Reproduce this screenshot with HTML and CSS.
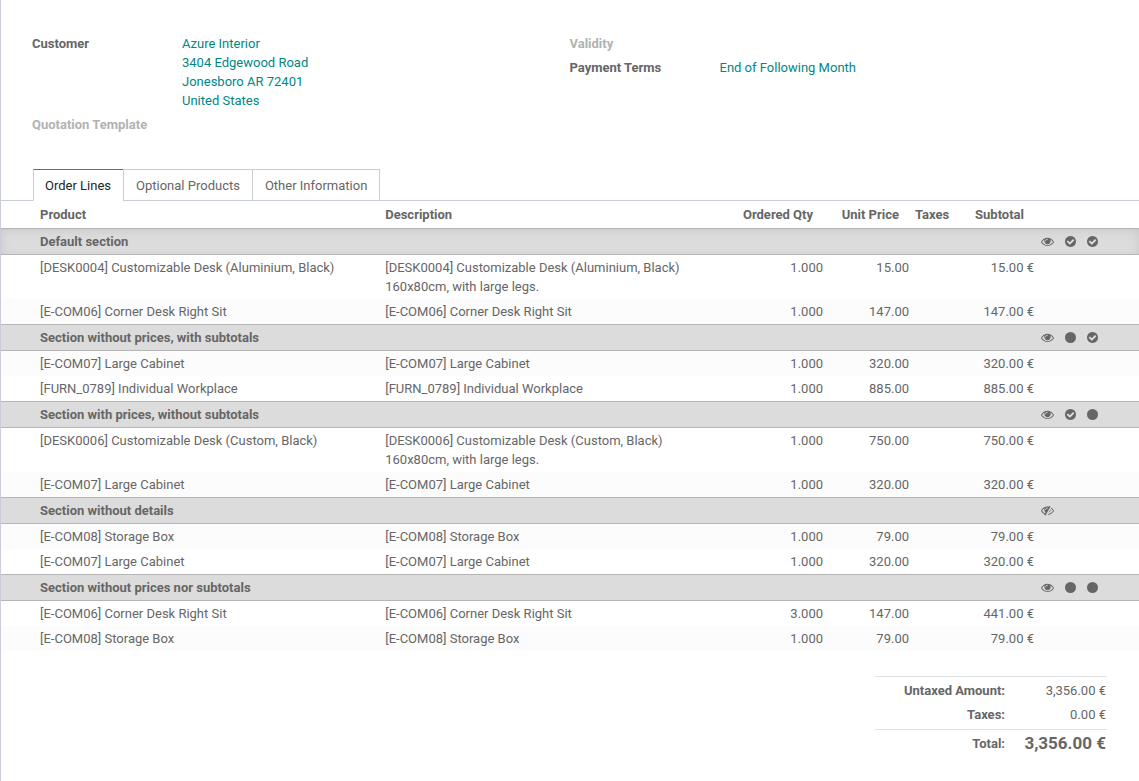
FILE: index.html
```html
<!DOCTYPE html>
<html lang="en">
<head>
<meta charset="utf-8">
<meta name="viewport" content="width=device-width, initial-scale=1">
<title>Quotation</title>
<link rel="stylesheet" href="styles.css">
</head>
<body>
<svg class="sprite" aria-hidden="true">
  <symbol id="eye" viewBox="0 0 1792 1536"><path d="M1664 832q-152-236-381-353 61 104 61 225 0 185-131.500 316.500t-316.500 131.500-316.500-131.500-131.500-316.500q0-121 61-225-229 117-381 353 133 205 333.500 326.500t434.500 121.500 434.500-121.500 333.500-326.500zm-720-384q0-20-14-34t-34-14q-125 0-214.500 89.500t-89.500 214.500q0 20 14 34t34 14 34-14 14-34q0-86 61-147t147-61q20 0 34-14t14-34zm848 384q0 34-20 69-140 230-376.500 368.500t-499.500 138.500-499.500-139-376.500-368q-20-35-20-69t20-69q140-229 376.500-368t499.500-139 499.500 139 376.500 368q20 35 20 69z"/></symbol>
  <symbol id="eye-off" viewBox="0 0 1792 1536"><path d="M555 1073l78-141q-87-63-136-159t-49-203q0-121 61-225-229 117-381 353 167 258 427 375zm389-759q0-20-14-34t-34-14q-125 0-214.500 89.500t-89.500 214.500q0 20 14 34t34 14 34-14 14-34q0-86 61-147t147-61q20 0 34-14t14-34zm363-191q0 7-1 9-106 189-316 567t-315 566l-49 89q-10 16-28 16-12 0-134-70-16-10-16-28 0-12 44-87-143-65-263.500-173t-208.500-245q-20-31-20-69t20-69q153-235 380-371t496-136q89 0 180 17l54-97q10-16 28-16 5 0 18 6t31 15.500 33 18.500 31.500 18.500 19.500 11.500q16 10 16 27zm37 447q0 139-79 253.500t-209 164.500l280-502q8 45 8 84zm448 128q0 35-20 69-39 64-109 145-150 172-347.500 267t-419.500 95l74-132q212-18 392.500-137t301.500-307q-115-179-282-294l63-112q95 64 182.500 153t144.500 184q20 34 20 69z" transform="translate(0 100)"/></symbol>
  <symbol id="check" viewBox="0 0 1536 1536"><path d="M1284 606q0-28-18-46l-91-90q-19-19-45-19t-45 19l-408 407-226-226q-19-19-45-19t-45 19l-91 90q-18 18-18 46 0 27 18 45l362 362q19 19 45 19 27 0 46-19l543-543q18-18 18-45zm252 162q0 209-103 385.500t-279.500 279.500-385.500 103-385.500-103-279.500-279.500-103-385.500 103-385.500 279.500-279.500 385.500-103 385.500 103 279.500 279.500 103 385.500z"/></symbol>
  <symbol id="dot" viewBox="0 0 1536 1536"><circle cx="768" cy="768" r="768"/></symbol>
</svg>
<main class="sheet">
  <div class="groups">
    <dl class="group">
      <div class="field"><dt>Customer</dt><dd><a href="#customer">Azure Interior<br>3404 Edgewood Road<br>Jonesboro AR 72401<br>United States</a></dd></div>
      <div class="field empty"><dt>Quotation Template</dt><dd></dd></div>
    </dl>
    <dl class="group">
      <div class="field empty"><dt>Validity</dt><dd></dd></div>
      <div class="field"><dt>Payment Terms</dt><dd><a href="#terms">End of Following Month</a></dd></div>
    </dl>
  </div>

  <div class="tabs" role="tablist">
    <button class="tab active" role="tab" aria-selected="true">Order Lines</button>
    <button class="tab" role="tab" aria-selected="false">Optional Products</button>
    <button class="tab" role="tab" aria-selected="false">Other Information</button>
  </div>

  <table class="lines">
    <colgroup><col class="c-product"><col><col class="c-qty"><col class="c-price"><col class="c-taxes"><col class="c-subtotal"><col class="c-eye"><col class="c-check"><col class="c-last"></colgroup>
    <thead>
      <tr><th>Product</th><th>Description</th><th class="num">Ordered Qty</th><th class="num">Unit Price</th><th>Taxes</th><th class="num">Subtotal</th><th></th><th></th><th></th></tr>
    </thead>
    <tbody>
      <tr class="section first"><th colspan="6">Default section</th><td><button class="icon" aria-label="Hide details"><svg class="wide"><use href="#eye"/></svg></button></td><td><button class="icon" aria-label="Hide prices"><svg><use href="#check"/></svg></button></td><td><button class="icon" aria-label="Hide subtotal"><svg><use href="#check"/></svg></button></td></tr>
      <tr><td>[DESK0004] Customizable Desk (Aluminium, Black)</td><td>[DESK0004] Customizable Desk (Aluminium, Black)<br>160x80cm, with large legs.</td><td class="num">1.000</td><td class="num">15.00</td><td></td><td class="num">15.00 €</td><td></td><td></td><td></td></tr>
      <tr><td>[E-COM06] Corner Desk Right Sit</td><td>[E-COM06] Corner Desk Right Sit</td><td class="num">1.000</td><td class="num">147.00</td><td></td><td class="num">147.00 €</td><td></td><td></td><td></td></tr>
      <tr class="section"><th colspan="6">Section without prices, with subtotals</th><td><button class="icon" aria-label="Hide details"><svg class="wide"><use href="#eye"/></svg></button></td><td><button class="icon" aria-label="Show prices"><svg><use href="#dot"/></svg></button></td><td><button class="icon" aria-label="Hide subtotal"><svg><use href="#check"/></svg></button></td></tr>
      <tr><td>[E-COM07] Large Cabinet</td><td>[E-COM07] Large Cabinet</td><td class="num">1.000</td><td class="num">320.00</td><td></td><td class="num">320.00 €</td><td></td><td></td><td></td></tr>
      <tr><td>[FURN_0789] Individual Workplace</td><td>[FURN_0789] Individual Workplace</td><td class="num">1.000</td><td class="num">885.00</td><td></td><td class="num">885.00 €</td><td></td><td></td><td></td></tr>
      <tr class="section"><th colspan="6">Section with prices, without subtotals</th><td><button class="icon" aria-label="Hide details"><svg class="wide"><use href="#eye"/></svg></button></td><td><button class="icon" aria-label="Hide prices"><svg><use href="#check"/></svg></button></td><td><button class="icon" aria-label="Show subtotal"><svg><use href="#dot"/></svg></button></td></tr>
      <tr><td>[DESK0006] Customizable Desk (Custom, Black)</td><td>[DESK0006] Customizable Desk (Custom, Black)<br>160x80cm, with large legs.</td><td class="num">1.000</td><td class="num">750.00</td><td></td><td class="num">750.00 €</td><td></td><td></td><td></td></tr>
      <tr><td>[E-COM07] Large Cabinet</td><td>[E-COM07] Large Cabinet</td><td class="num">1.000</td><td class="num">320.00</td><td></td><td class="num">320.00 €</td><td></td><td></td><td></td></tr>
      <tr class="section"><th colspan="6">Section without details</th><td><button class="icon" aria-label="Show details"><svg class="wide"><use href="#eye-off"/></svg></button></td><td></td><td></td></tr>
      <tr><td>[E-COM08] Storage Box</td><td>[E-COM08] Storage Box</td><td class="num">1.000</td><td class="num">79.00</td><td></td><td class="num">79.00 €</td><td></td><td></td><td></td></tr>
      <tr><td>[E-COM07] Large Cabinet</td><td>[E-COM07] Large Cabinet</td><td class="num">1.000</td><td class="num">320.00</td><td></td><td class="num">320.00 €</td><td></td><td></td><td></td></tr>
      <tr class="section"><th colspan="6">Section without prices nor subtotals</th><td><button class="icon" aria-label="Hide details"><svg class="wide"><use href="#eye"/></svg></button></td><td><button class="icon" aria-label="Show prices"><svg><use href="#dot"/></svg></button></td><td><button class="icon" aria-label="Show subtotal"><svg><use href="#dot"/></svg></button></td></tr>
      <tr><td>[E-COM06] Corner Desk Right Sit</td><td>[E-COM06] Corner Desk Right Sit</td><td class="num">3.000</td><td class="num">147.00</td><td></td><td class="num">441.00 €</td><td></td><td></td><td></td></tr>
      <tr><td>[E-COM08] Storage Box</td><td>[E-COM08] Storage Box</td><td class="num">1.000</td><td class="num">79.00</td><td></td><td class="num">79.00 €</td><td></td><td></td><td></td></tr>
    </tbody>
  </table>

  <dl class="totals">
    <div class="sum"><dt>Untaxed Amount:</dt><dd>3,356.00 €</dd></div>
    <div class="sum"><dt>Taxes:</dt><dd>0.00 €</dd></div>
    <div class="sum grand"><dt>Total:</dt><dd>3,356.00 €</dd></div>
  </dl>
</main>
</body>
</html>
```
FILE: styles.css
```css
* { box-sizing: border-box; }
body {
  margin: 0;
  background: #fff;
  color: #666;
  font: 13px/19px Roboto, "Liberation Sans", sans-serif;
}
dl, dd { margin: 0; }
.sprite { display: none; }
.sheet {
  min-height: 100vh;
  padding: 34px 0 24px;
  border-left: 1px solid #c9ced6;
}
a { color: #008784; text-decoration: none; }

.groups {
  display: grid;
  grid-template-columns: 1fr 1fr;
  padding: 0 32px 0 31px;
}
.group { display: flex; flex-direction: column; gap: 5px; }
.field { display: flex; }
.field dt { width: 150px; font-weight: 700; }
.field.empty dt { color: #b2b2b2; }

.tabs {
  display: flex;
  margin-top: 35px;
  padding-left: 32px;
  border-bottom: 1px solid #c9ced6;
}
.tab {
  margin: 0 0 -1px -1px;
  padding: 6px 12px 5px;
  border: 1px solid #c9ced6;
  background: #fff;
  color: #666;
  font: inherit;
}
.tab.active {
  margin-left: 0;
  padding-left: 11px;
  border-top-color: #875a7b;
  border-bottom-color: #fff;
  color: #212529;
}

.lines {
  width: 100%;
  table-layout: fixed;
  border-spacing: 0;
}
.c-product { width: 33.5%; }
.c-qty { width: 87px; }
.c-price { width: 86px; }
.c-taxes { width: 44px; }
.c-subtotal { width: 81px; }
.c-eye { width: 24px; }
.c-check { width: 22px; }
.c-last { width: 56px; }
.lines th, .lines td {
  padding: 3px;
  text-align: left;
  vertical-align: top;
}
.lines thead th { padding: 4px 3px; white-space: nowrap; }
.lines tr > :first-child { padding-left: 39px; }
.lines thead tr > :first-child { padding-left: 39px; }
.lines .num { text-align: right; }
.lines thead .num { padding-right: 13px; }
.lines tbody tr:nth-child(odd) { background: #fcfcfc; }
.lines tbody tr.section:nth-child(n) { background: #dcdcdc; }
.section th, .section td {
  border-top: 1px solid #b5b5b5;
  border-bottom: 1px solid #b5b5b5;
}
.lines .section td { padding: 3px 0 3px 4px; }
.section.first { box-shadow: inset 0 2px 10px #c6c6c6; }
.icon {
  display: flex;
  align-items: center;
  height: 19px;
  padding: 0;
  border: 0;
  background: none;
  color: #666;
}
.icon svg { width: 11px; height: 11px; fill: currentColor; }
.icon .wide { width: 13px; }

.totals {
  width: 232px;
  margin: 25px 32px 0 auto;
  padding-top: 1px;
  border-top: 1px solid #dee2e6;
}
.sum { display: flex; align-items: center; height: 24px; padding-right: 1px; }
.sum dt { width: 130px; font-weight: 700; text-align: right; }
.sum dd { flex: 1; text-align: right; }
.grand { height: 27px; margin-top: 3px; border-top: 1px solid #dee2e6; }
.grand dd { font-size: 17px; font-weight: 700; }
```
